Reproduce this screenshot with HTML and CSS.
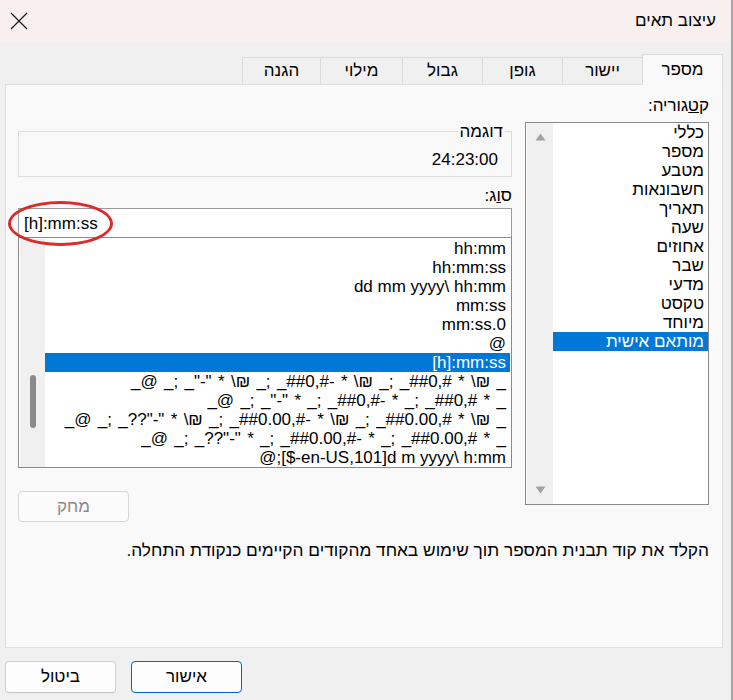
FILE: index.html
```html
<!DOCTYPE html>
<html lang="he" dir="rtl">
<head>
<meta charset="utf-8">
<title>עיצוב תאים</title>
<link rel="stylesheet" href="styles.css">
</head>
<body>
<div class="window">
  <header class="titlebar">
    <span class="title">עיצוב תאים</span>
    <button class="close" aria-label="סגור">
      <svg width="18" height="18" viewBox="0 0 18 18"><path d="M1 1 L17 17 M17 1 L1 17" stroke="#1f1f1f" stroke-width="1.3" fill="none"/></svg>
    </button>
  </header>

  <nav class="tabs">
    <div class="tab active">מספר</div>
    <div class="tab">יישור</div>
    <div class="tab">גופן</div>
    <div class="tab">גבול</div>
    <div class="tab">מילוי</div>
    <div class="tab">הגנה</div>
  </nav>

  <section class="panel">
    <div class="cols">
      <div class="cat-col">
        <div class="label">ק<u>ט</u>גוריה:</div>
        <div class="listbox cat-list">
          <div class="rows">
            <div class="row">כללי</div>
            <div class="row">מספר</div>
            <div class="row">מטבע</div>
            <div class="row">חשבונאות</div>
            <div class="row">תאריך</div>
            <div class="row">שעה</div>
            <div class="row">אחוזים</div>
            <div class="row">שבר</div>
            <div class="row">מדעי</div>
            <div class="row">טקסט</div>
            <div class="row">מיוחד</div>
            <div class="row sel">מותאם אישית</div>
          </div>
          <div class="scrollbar arrows">
            <svg width="11" height="8" viewBox="0 0 11 8"><path d="M0.5 7.5 L5.5 0.5 L10.5 7.5 Z" fill="#a3a3a3"/></svg>
            <svg width="11" height="8" viewBox="0 0 11 8"><path d="M0.5 0.5 L5.5 7.5 L10.5 0.5 Z" fill="#a3a3a3"/></svg>
          </div>
        </div>
      </div>

      <div class="main-col">
        <div class="sample">
          <div class="legend">דוגמה</div>
          <div class="sample-value"><bdo dir="ltr">24:23:00</bdo></div>
        </div>
        <div class="label type-label">ס<u>ו</u>ג:</div>
        <div class="type-input">
          <bdo dir="ltr" class="type-text">[h]:mm:ss</bdo>
          <span class="mark"></span>
        </div>
        <div class="listbox fmt-list">
          <div class="rows">
            <div class="row"><bdo dir="ltr">hh:mm</bdo></div>
            <div class="row"><bdo dir="ltr">hh:mm:ss</bdo></div>
            <div class="row"><bdo dir="ltr">dd mm yyyy\ hh:mm</bdo></div>
            <div class="row"><bdo dir="ltr">mm:ss</bdo></div>
            <div class="row"><bdo dir="ltr">mm:ss.0</bdo></div>
            <div class="row"><bdo dir="ltr">@</bdo></div>
            <div class="row sel"><bdo dir="ltr">[h]:mm:ss</bdo></div>
            <div class="row code"><bdo dir="ltr">_@ _; _"-" * \₪ _; _##0,#- * \₪ _; _##0,# * \₪ _</bdo></div>
            <div class="row code"><bdo dir="ltr">_@ _; _"-" * _; _##0,#- * _; _##0,# * _</bdo></div>
            <div class="row code"><bdo dir="ltr">_@ _; _??"-" * \₪ _; _##0.00,#- * \₪ _; _##0.00,# * \₪ _</bdo></div>
            <div class="row code"><bdo dir="ltr">_@ _; _??"-" * _; _##0.00,#- * _; _##0.00,# * _</bdo></div>
            <div class="row"><bdo dir="ltr">@;[$-en-US,101]d m yyyy\ h:mm</bdo></div>
          </div>
          <div class="scrollbar thin">
            <span class="thumb"></span>
          </div>
        </div>
        <div class="delete-row">
          <button class="btn" disabled>מחק</button>
        </div>
      </div>
    </div>
    <p class="help">הקלד את קוד תבנית המספר תוך שימוש באחד מהקודים הקיימים כנקודת התחלה.</p>
  </section>

  <footer class="footer">
    <button class="btn primary">אישור</button>
    <button class="btn">ביטול</button>
  </footer>
</div>
</body>
</html>
```

FILE: styles.css
```css
* { box-sizing: border-box; }

html, body {
  margin: 0;
  padding: 0;
}

body {
  width: 733px;
  height: 700px;
  overflow: hidden;
  font-family: "Liberation Sans", "DejaVu Sans", sans-serif;
  font-size: 17px;
  color: #000;
  background: #f0f0f0;
}

.window {
  height: 700px;
  display: flex;
  flex-direction: column;
  background: #f0f0f0;
  border-right: 2px solid #a5a5a5;
}

/* title bar */
.titlebar {
  height: 42px;
  flex: none;
  display: flex;
  align-items: center;
  justify-content: space-between;
  padding: 0 15px 0 10px;
  background: #f8f0ee;
}

.title {
  font-size: 17px;
  line-height: 20px;
}

.close {
  width: 18px;
  height: 18px;
  padding: 0;
  border: 0;
  background: none;
  display: flex;
}

/* tabs */
.tabs {
  height: 43px;
  flex: none;
  display: flex;
  align-items: flex-end;
  padding-right: 8px;
  margin-bottom: -1px;
  position: relative;
  z-index: 1;
}

.tab {
  width: 81px;
  height: 27px;
  margin-left: -1px;
  margin-bottom: 1px;
  border: 1px solid #dadada;
  border-bottom: none;
  background: #f0f0f0;
  display: flex;
  align-items: center;
  justify-content: center;
  font-size: 17px;
}

.tab:nth-child(5) { width: 83px; }
.tab:nth-child(6) { width: 79px; }

.tab.active {
  height: 31px;
  margin-bottom: 0;
  background: #f9f9f9;
}

/* panel */
.panel {
  flex: none;
  height: 564px;
  margin: 0 8px 0 5px;
  background: #f9f9f9;
  border: 1px solid #dfdfdf;
  padding: 11px 13px 0 12px;
}

.cols {
  display: grid;
  grid-template-columns: 184px 494px;
  column-gap: 13px;
  align-items: start;
}

.label {
  height: 19px;
  line-height: 19px;
}

.listbox {
  display: flex;
  background: #fff;
  border: 1px solid #8a8a8a;
}

.rows {
  flex: 1;
  min-width: 0;
}

.row {
  height: 19px;
  line-height: 19px;
  padding-right: 4px;
  white-space: pre;
}

.row.code {
  word-spacing: 1.6px;
}

.row.sel {
  background: #0078d7;
  color: #fff;
}

.scrollbar {
  flex: none;
  background: #f0f0f0;
  display: flex;
  flex-direction: column;
  align-items: center;
}

/* category list */
.cat-list {
  margin-top: 7px;
  height: 383px;
  padding-left: 1px;
}

.scrollbar.arrows {
  width: 26px;
  justify-content: space-between;
  padding: 10px 0;
}

/* main column */
.sample {
  margin-top: 35px;
  height: 46px;
  border: 1px solid #dcdcdc;
}

.legend {
  width: fit-content;
  margin: -10px 6px 0 0;
  padding: 0 2px;
  height: 19px;
  line-height: 19px;
  background: #f9f9f9;
}

.sample-value {
  margin-top: 9px;
  padding-right: 13px;
  line-height: 19px;
}

.type-label {
  margin-top: 9px;
}

.type-input {
  position: relative;
  margin-top: 3px;
  height: 29px;
  border: 1px solid #9a9a9a;
  border-bottom: none;
  background: #fff;
  display: flex;
  align-items: center;
  justify-content: flex-end;
  padding-left: 5px;
}

.type-text {
  line-height: 19px;
}

.mark {
  position: absolute;
  left: -11px;
  top: -8px;
  width: 105px;
  height: 45px;
  border: 3px solid #dc2b2b;
  border-radius: 50%;
}

.fmt-list {
  height: 231px;
  padding: 1px 1px 0 1px;
}

.scrollbar.thin {
  width: 25px;
}

.thumb {
  width: 6px;
  height: 53px;
  margin-top: 136px;
  border-radius: 3px;
  background: #8a8a8a;
}

.delete-row {
  margin-top: 23px;
  display: flex;
  justify-content: flex-end;
}

.help {
  margin: 19px 0 0;
  line-height: 19px;
  font-size: 17.3px;
}

/* buttons */
.btn {
  width: 111px;
  height: 31px;
  padding: 0;
  border: 1px solid #d0d0d0;
  border-bottom-color: #c2c2c2;
  border-radius: 4px;
  background: #fdfdfd;
  font-family: inherit;
  font-size: 17px;
  color: #000;
}

.btn:disabled {
  color: #8a8a8a;
  background: #fbfbfb;
  border-color: #d6d6d6;
}

.btn.primary {
  border-color: #0067c0;
}

.footer {
  flex: 1;
  display: flex;
  justify-content: flex-end;
  gap: 15px;
  padding: 13px 0 0 5px;
}

.footer .btn {
  height: 32px;
}
```
